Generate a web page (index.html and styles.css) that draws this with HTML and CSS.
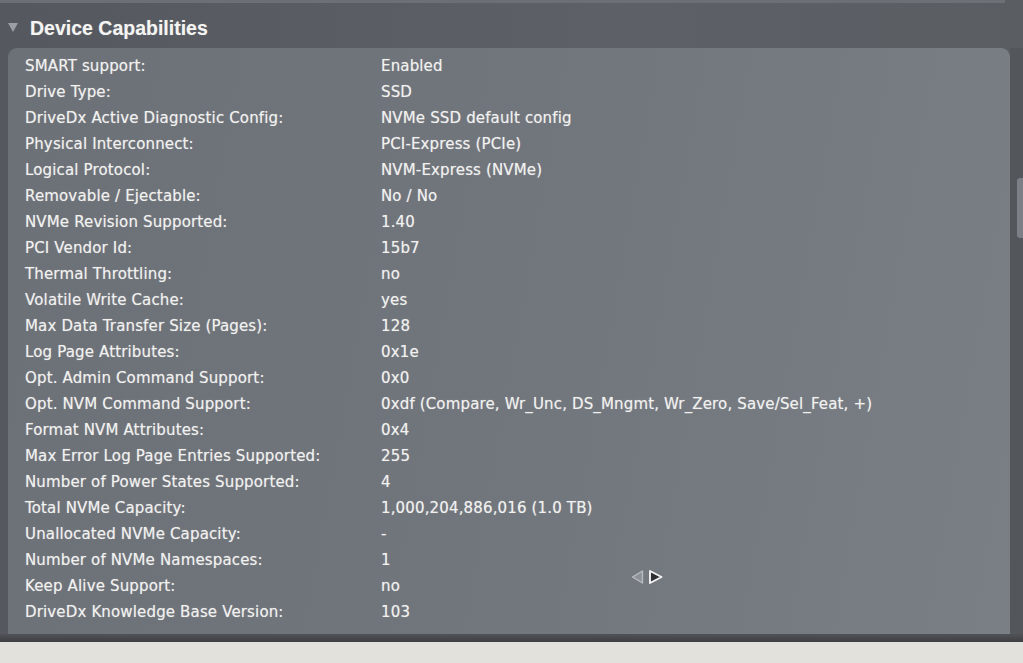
FILE: index.html
```html
<!DOCTYPE html>
<html>
<head>
<meta charset="utf-8">
<link rel="stylesheet" href="styles.css">
</head>
<body>
<div class="screen">
  <div class="topband"></div>
  <div class="section-head">
    <span class="disclosure"></span>
    <h2 class="title">Device Capabilities</h2>
  </div>
  <div class="panel-wrap">
    <div class="panel">
      <div class="rows">
        <div class="row"><span class="k">SMART support:</span><span class="v">Enabled</span></div>
        <div class="row"><span class="k">Drive Type:</span><span class="v">SSD</span></div>
        <div class="row"><span class="k">DriveDx Active Diagnostic Config:</span><span class="v">NVMe SSD default config</span></div>
        <div class="row"><span class="k">Physical Interconnect:</span><span class="v">PCI-Express (PCIe)</span></div>
        <div class="row"><span class="k">Logical Protocol:</span><span class="v">NVM-Express (NVMe)</span></div>
        <div class="row"><span class="k">Removable / Ejectable:</span><span class="v">No / No</span></div>
        <div class="row"><span class="k">NVMe Revision Supported:</span><span class="v">1.40</span></div>
        <div class="row"><span class="k">PCI Vendor Id:</span><span class="v">15b7</span></div>
        <div class="row"><span class="k">Thermal Throttling:</span><span class="v">no</span></div>
        <div class="row"><span class="k">Volatile Write Cache:</span><span class="v">yes</span></div>
        <div class="row"><span class="k">Max Data Transfer Size (Pages):</span><span class="v">128</span></div>
        <div class="row"><span class="k">Log Page Attributes:</span><span class="v">0x1e</span></div>
        <div class="row"><span class="k">Opt. Admin Command Support:</span><span class="v">0x0</span></div>
        <div class="row"><span class="k">Opt. NVM Command Support:</span><span class="v">0xdf (Compare, Wr_Unc, DS_Mngmt, Wr_Zero, Save/Sel_Feat, +)</span></div>
        <div class="row"><span class="k">Format NVM Attributes:</span><span class="v">0x4</span></div>
        <div class="row"><span class="k">Max Error Log Page Entries Supported:</span><span class="v">255</span></div>
        <div class="row"><span class="k">Number of Power States Supported:</span><span class="v">4</span></div>
        <div class="row"><span class="k">Total NVMe Capacity:</span><span class="v">1,000,204,886,016 (1.0 TB)</span></div>
        <div class="row"><span class="k">Unallocated NVMe Capacity:</span><span class="v">-</span></div>
        <div class="row"><span class="k">Number of NVMe Namespaces:</span><span class="v">1</span></div>
        <div class="row"><span class="k">Keep Alive Support:</span><span class="v">no</span></div>
        <div class="row"><span class="k">DriveDx Knowledge Base Version:</span><span class="v">103</span></div>
      </div>
      <div class="pager">
        <svg width="34" height="16" viewBox="0 0 34 16">
          <path d="M12.5 2 L2.5 8 L12.5 14 Z" fill="#8e9298" stroke="#b8bcc1" stroke-width="1.4" stroke-linejoin="round"/>
          <path d="M20 2 L31.5 8 L20 14 Z" fill="#2c2e32" stroke="#f4f4f4" stroke-width="1.9" stroke-linejoin="round"/>
        </svg>
      </div>
    </div>
    <div class="side"><div class="side-knob"></div></div>
  </div>
  <div class="bottom-edge"></div>
  <div class="desk"></div>
</div>
</body>
</html>
```

FILE: styles.css
```css
html, body {
  margin: 0;
  padding: 0;
}
body {
  width: 1023px;
  height: 663px;
  overflow: hidden;
  background: #5a5d63;
  font-family: "DejaVu Sans", "Liberation Sans", sans-serif;
  color: #f1f1ef;
}
.screen {
  display: flex;
  flex-direction: column;
  height: 663px;
  background: linear-gradient(90deg, #55585e 0%, #5d6066 60%, #5a5d62 100%);
}
.topband {
  height: 3px;
  margin-right: 18px;
  background: #6c7076;
  flex: none;
}
.section-head {
  height: 45px;
  display: flex;
  align-items: center;
  padding-left: 8px;
  gap: 12px;
  flex: none;
}
.disclosure {
  width: 0;
  height: 0;
  border-left: 5px solid transparent;
  border-right: 5px solid transparent;
  border-top: 9px solid #9a9ea5;
  margin-top: 3px;
}
.title {
  margin: 0;
  font-family: "Liberation Sans", "DejaVu Sans", sans-serif;
  font-size: 19.5px;
  font-weight: bold;
  color: #f4f4f2;
  margin-top: 6px;
  text-shadow: 0 0 1px rgba(255, 255, 255, 0.35);
}
.panel-wrap {
  flex: 1;
  display: flex;
  min-height: 0;
}
.panel {
  position: relative;
  flex: 1;
  margin-left: 8px;
  border-radius: 9px 9px 0 0;
  background: linear-gradient(100deg, #6c7177 0%, #71767c 50%, #7a7f86 100%);
  padding: 5px 0 0 17px;
}
.side {
  width: 13px;
  position: relative;
  background: #53565b;
}
.side-knob {
  position: absolute;
  right: 0;
  top: 130px;
  width: 6px;
  height: 60px;
  background: #7c8086;
  border-radius: 3px 0 0 3px;
}
.rows {
  display: flex;
  flex-direction: column;
}
.row {
  display: flex;
  height: 26px;
  align-items: center;
  font-size: 15px;
  letter-spacing: 0.15px;
  white-space: nowrap;
  text-shadow: 0 0 1px rgba(255, 255, 255, 0.45);
}
.k {
  width: 356px;
  flex: none;
}
.v {
  flex: none;
}
.pager {
  position: absolute;
  left: 622px;
  top: 521px;
  line-height: 0;
}
.bottom-edge {
  height: 8px;
  flex: none;
  background: linear-gradient(180deg, #505357 0%, #3d3f42 100%);
}
.desk {
  height: 21px;
  flex: none;
  background: #e3e1db;
}
```
